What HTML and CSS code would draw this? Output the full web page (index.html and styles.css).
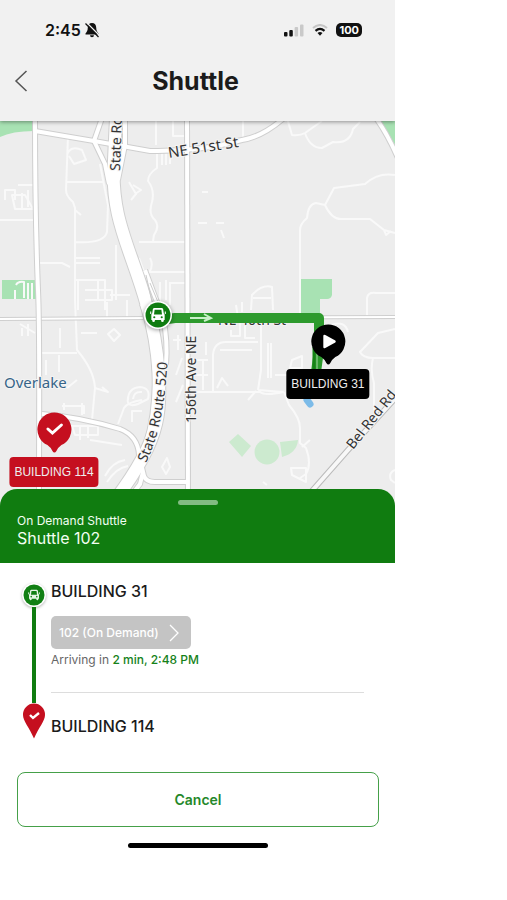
FILE: index.html
```html
<!DOCTYPE html>
<html lang="en">
<head>
    <meta charset="UTF-8">
    <meta name="viewport" content="width=device-width, initial-scale=1.0">
    <title>Shuttle</title>
    <link rel="stylesheet" href="styles.css">
</head>
<body>
    <div class="app">
        <header class="header">
            <div class="status-bar">
                <div class="status-left">
                    <span>2:45</span>
                    <svg width="16" height="16" viewBox="0 0 16 16">
                        <path d="M8 1C5.300 1 3.800 3 3.800 5.500C3.800 9 2.500 10 1.500 11.500V12.500H14.500V11.500C13.500 10 12.200 9 12.200 5.500C12.200 3 10.700 1 8 1ZM6 13.300A2 2 0 0 0 10 13.300Z" fill="#111"/>
                        <path d="M3 1L15.500 13.500" stroke="#f1f1f1" stroke-width="1.200"/>
                        <path d="M1.500 1.500L14.500 15" stroke="#111" stroke-width="1.200"/>
                    </svg>
                </div>
                <div class="status-right">
                    <svg width="20" height="13" viewBox="0 0 20 13">
                        <rect x="0" y="8" width="3.500" height="4.500" rx="1" fill="#111"/>
                        <rect x="5.300" y="6" width="3.500" height="6.500" rx="1" fill="#111"/>
                        <rect x="10.600" y="3" width="3.500" height="9.500" rx="1" fill="#c9c9c9"/>
                        <rect x="16" y="0.500" width="3.500" height="12" rx="1" fill="#c9c9c9"/>
                    </svg>
                    <svg width="16" height="12" viewBox="0 0 16 12" fill="none">
                        <path d="M1 4Q8 -2 15 4" stroke="#c6c6c6" stroke-width="2"/>
                        <path d="M3.500 6.800Q8 3 12.500 6.800" stroke="#111" stroke-width="2.200"/>
                        <path d="M5.500 9Q8 7 10.500 9L8 11.700Z" fill="#111"/>
                    </svg>
                    <span class="battery">100</span>
                </div>
            </div>
            <div class="title-bar">
                <button class="back" aria-label="Back">
                    <svg width="14" height="22" viewBox="0 0 14 22" fill="none" stroke="#555" stroke-width="1.500"><path d="M12.500 1L2 11L12.500 21"/></svg>
                </button>
                <h1>Shuttle</h1>
            </div>
        </header>

        <main>
            <div class="map">
                <svg class="map-canvas" viewBox="0 121 395 384">
                    <defs>
                        <path id="route520" d="M146 463C160 434 166 400 168 350"/>
                        <path id="belred" d="M353 450L420 366"/>
                        <!-- main roads, drawn once as casing and once as fill -->
                        <g id="roads" fill="none">
                            <path d="M35 118C35 180 36 240 38 290C40 330 39 400 39 500"/>
                            <path d="M187 118L188 500"/>
                            <path d="M35 131L94 141L150 151Q200 152 242 140Q262 137 284 118"/>
                            <path d="M102 118L94 141L105 164L109 184"/>
                            <path d="M125 118L125 145L118 180"/>
                            <path d="M376 118Q388 135 398 158"/>
                            <path d="M42 414Q80 417 120 429Q138 436 139 455L144 476Q146 482 155 482H188"/>
                            <path d="M110 500Q130 480 142 461"/>
                            <path d="M128 500L140 484L143 472"/>
                            <path d="M145 270L163 318Q168 340 166 365"/>
                            <path d="M142 304Q158 345 154 400Q152 430 141 458"/>
                        </g>
                        <path id="ne40" d="M0 319L150 318L395 317" fill="none"/>
                        <symbol id="car" viewBox="0 0 18 18">
                            <path fill-rule="evenodd" d="M5 1H13Q14.500 1 14.800 2.500L15.500 7Q16.500 7.500 16.500 9V14.500H15.500V15.500Q15.500 17 14 17T12.500 15.500V14.500H5.500V15.500Q5.500 17 4 17T2.500 15.500V14.500H1.500V9Q1.500 7.500 2.500 7L3.200 2.500Q3.500 1 5 1ZM5.200 3L4.500 8.500H13.500L12.800 3ZM4.800 10.300A1.200 1.200 0 1 0 4.800 12.700A1.200 1.200 0 1 0 4.800 10.300ZM13.200 10.300A1.200 1.200 0 1 0 13.200 12.700A1.200 1.200 0 1 0 13.200 10.300Z"/>
                            <path d="M.8 5V8M17.200 5V8" stroke="currentColor" stroke-width="1.200"/>
                        </symbol>
                    </defs>
                    <rect y="121" width="395" height="384" fill="#ededed"/>
                    <g fill="#a8e2b3">
                        <path d="M0 121H34V131Q12 131 0 137Z"/>
                        <path d="M2 280H36V299H2Z"/>
                        <path d="M301 279H332V295Q331 299 327 299H320V318H301Z"/>
                        <path d="M381 121H395V145Z"/>
                    </g>
                    <g fill="#cceacf">
                        <path d="M229 442L238 434L251 446L242 457Z"/>
                        <circle cx="267" cy="452" r="12.500"/>
                        <path d="M280 442L298 440Q297 453 282 457Z"/>
                    </g>
                    <g class="lanes">
                        <path d="M68 136L66 190Q66 196 73 202L75 208V300L77 350Q94 370 95 388L92 420M66 182H104M67 155Q70 145 82 150L86 160L74 164L69 156M75 242Q104 244 107 232L108 205L104 185L100 164M75 210L81 215"/>
                        <path d="M0 220H36M5 200V190H15V200M18 185H35M12 195H25L33 209H15ZM22 193V210M28 190V207"/>
                        <path d="M40 263H62L70 267M75 263H100M75 258H100M75 280H105V310M78 280V310M85 290H112V300H85M116 245V300M110 295H130M98 280V300"/>
                        <path d="M156 118V145M157 150V168Q148 174 148 181Q155 190 152 202Q148 214 155 220Q160 226 154 235L153 241M139 242H187M139 258L144 272H187M150 258Q154 265 149 273M170 283H187M160 282V310M166 280V300M170 282V305"/>
                        <path d="M173 118V136H187M162 153V165M166 153V165M170 153V164M129 182L136 194L131 200M133 185L141 190L135 194"/>
                        <path d="M16 285Q18 281 24 282V298M28 283V299M32 283V299M15 290V299"/>
                        <path d="M40 353H77M20 324L35 333M22 328V336M28 324V336M60 328V348M59 355V372M77 380L67 388M46 360V375M81 333H97M114 329L120 335L114 341L108 334ZM127 300V318M107 302V318"/>
                        <path d="M62 406H84V414M64 410V403M82 403V415M72 426H98V435H75ZM80 426V440M88 426V438M118 424L124 408Q128 402 142 400M128 400Q128 388 140 387Q151 388 148 399L138 404Q126 408 128 398M133 399Q134 391 142 392M95 388L108 392L102 387M132 422V411H142M90 440L122 445"/>
                        <path d="M167 458L162 467L166 474L170 467ZM178 335V350M173 340H181M176 375L182 358M176 402L183 385M105 476Q112 462 125 460M107 482Q116 468 128 466"/>
                        <path d="M243 118V140M287 118L292 135Q300 136 305 133L322 121M305 133Q310 148 322 148L333 142Q350 144 353 129L360 122"/>
                        <path d="M300 318V230Q300 224 307 218Q308 204 316 203L325 205L334 188L365 184Q378 172 395 175M325 205Q332 220 342 219H370L384 230L395 233M384 230L386 235L391 231M367 317V298Q368 292 376 293H395"/>
                        <path d="M251 310L252 295Q262 284 272 287L273 310M253 298H271M236 305L238 318M242 302V312M202 192H208M198 223H207M216 223H224M221 230L224 238"/>
                        <path d="M189 392H260Q265 396 283 392L258 390M213 392V355Q214 342 226 342H258M261 323V370L258 390M261 343V330M231 330V336H240V322M245 324V338H255M203 360V390M220 350H252M217 388L222 378L228 386M268 343V378M271 343V378M248 400L256 391M190 360H208M192 375H208M206 342V355"/>
                        <path d="M284 392L289 405Q300 418 300 428V443L306 448Q312 464 306 474L300 478M302 447L310 440M291 468H306V482L292 475ZM395 470Q388 473 391 480L395 483M263 482L267 485M292 360L302 356V368H290ZM290 372H304M275 375H288"/>
                        <path d="M395 329L378 333L360 352Q363 358 373 358H395M373 358Q370 370 374 383V410M331 325Q345 320 348 332M367 300V317"/>
                    </g>
                    <use href="#ne40" class="casing casing-thin"/>
                    <use href="#ne40" class="road road-thin"/>
                    <use href="#roads" class="casing"/>
                    <path class="highway-casing" d="M116 118L114 160C110 220 132 250 147 306C160 350 162 400 156 424Q149 455 115 500"/>
                    <use href="#roads" class="road"/>
                    <path class="highway" d="M116 118L114 160C110 220 132 250 147 306C160 350 162 400 156 424Q149 455 115 500"/>
                    <path d="M146 275L152 302M150 283L158 302" stroke="#ccc" fill="none"/>
                    <path class="belred-casing" d="M304 500L348 450L400 393"/>
                    <path class="belred" d="M304 500L348 450L400 393"/>
                    <g class="labels">
                        <text class="wide" x="169" y="158" transform="rotate(-9 169 158)">NE 51st St</text>
                        <text x="120" y="171" transform="rotate(-88 120 171)">State Route 520</text>
                        <text x="196" y="423" transform="rotate(-90 196 423)">156th Ave NE</text>
                        <text x="218" y="325">NE 40th St</text>
                        <text><textPath href="#route520">State Route 520</textPath></text>
                        <text><textPath href="#belred">Bel Red Rd</textPath></text>
                        <text class="wide district" x="4" y="388">Overlake</text>
                    </g>
                    <path d="M307 400L310 404" stroke="#7cbbe8" stroke-width="7" stroke-linecap="round"/>
                    <path d="M168 319L175 318H319V350L316 372" fill="none" stroke="#2d9a2d" stroke-width="10" stroke-linejoin="round"/>
                    <path d="M314 347V370" stroke="#168316" stroke-width="3"/>
                    <path d="M317 350V370" stroke="#a6d7a6" stroke-width="1"/>
                    <path d="M190 318H209M204 314L211 318L204 321" stroke="#c8f0c8" stroke-width="2" fill="none"/>
                </svg>

                <div class="pin pin-car">
                    <svg width="28" height="28" viewBox="0 0 28 28" color="#fff" fill="#fff">
                        <circle cx="14" cy="14" r="14"/>
                        <circle cx="14" cy="14" r="12.500" fill="#0e7c10"/>
                        <use href="#car" x="6" y="6" width="16" height="16"/>
                    </svg>
                </div>
                <div class="pin pin-start">
                    <svg width="36" height="42" viewBox="0 0 36 42">
                        <path d="M18 0.500A17 17 0 0 1 25 33Q22 35 20 39Q18 42 16 39Q14 35 11 33A17 17 0 0 1 18 0.500Z" fill="#000"/>
                        <path d="M13 12Q13 10 15 11L25 16.500Q26 17.500 25 18.500L15 24Q13 25 13 23Z" fill="#fff"/>
                    </svg>
                    <span class="pin-label">BUILDING 31</span>
                </div>
                <div class="pin pin-end">
                    <svg width="36" height="42" viewBox="0 0 36 42">
                        <path d="M18 0.500A17 17 0 0 1 25 33Q22 35 20 39Q18 42 16 39Q14 35 11 33A17 17 0 0 1 18 0.500Z" fill="#c50f1f"/>
                        <path d="M11.500 17L16 21L25 13" fill="none" stroke="#fff" stroke-width="3" stroke-linecap="round"/>
                    </svg>
                    <span class="pin-label">BUILDING 114</span>
                </div>
            </div>

            <section class="sheet">
                <div class="sheet-header">
                    <div class="handle"></div>
                    <p>On Demand Shuttle</p>
                    <h2>Shuttle 102</h2>
                </div>
                <div class="trip">
                    <div class="timeline">
                        <svg class="stop-car" width="24" height="24" viewBox="0 0 24 24" color="#e5f5e5" fill="#e5f5e5">
                            <circle cx="12" cy="12" r="10.500" fill="#128014"/>
                            <use href="#car" x="6" y="6" width="12" height="12"/>
                        </svg>
                        <div class="line"></div>
                        <svg width="24" height="36" viewBox="0 0 24 36">
                            <path d="M12 0.500A11 11 0 0 1 23 12C23 18 17 24 12 35.500C7 24 1 18 1 12A11 11 0 0 1 12 0.500Z" fill="#c50f1f"/>
                            <path d="M8 12L11 15L17 10" fill="none" stroke="#fff" stroke-width="2.400"/>
                        </svg>
                    </div>
                    <div class="stops">
                        <div class="stop">
                            <h3>BUILDING 31</h3>
                            <button class="route-btn">
                                102 (On Demand)
                                <svg width="10" height="18" viewBox="0 0 10 18" fill="none" stroke="#fff" stroke-width="1.300"><path d="M1 1L9 9L1 17"/></svg>
                            </button>
                            <p class="arrival">Arriving in <span>2 min, 2:48 PM</span></p>
                        </div>
                        <h3>BUILDING 114</h3>
                    </div>
                </div>
                <button class="cancel">Cancel</button>
                <div class="home-indicator"></div>
            </section>
        </main>
    </div>
</body>
</html>
```
FILE: styles.css
```css
* {
    box-sizing: border-box;
}
body {
    margin: 0;
    background: #fff;
    color: #1b1b1b;
    font-family: Inter, sans-serif;
}
h1, h2, h3, p {
    margin: 0;
}
button {
    font-family: inherit;
    cursor: pointer;
}
svg {
    display: block;
}
.app {
    width: 100%;
    max-width: 395px;
    overflow: hidden;
}
.header {
    position: relative;
    z-index: 1;
    background: #f1f1f1;
    box-shadow: 0 1px 4px rgba(0, 0, 0, 0.4);
    padding-top: 20px;
}
.status-bar {
    display: flex;
    justify-content: space-between;
    align-items: center;
    height: 20px;
    padding: 0 33px 0 45px;
}
.status-left, .status-right {
    display: flex;
    align-items: center;
}
.status-left {
    gap: 3px;
    font-size: 16px;
    font-weight: 600;
    color: #111;
}
.status-right {
    gap: 8px;
}
.battery {
    background: #111;
    color: #fff;
    border-radius: 5px;
    font-size: 11px;
    font-weight: 700;
    line-height: 14px;
    padding: 0 3px;
}
.title-bar {
    display: grid;
    grid-template-columns: 44px 1fr 48px;
    align-items: center;
    height: 81px;
}
.title-bar h1 {
    font-size: 25px;
    font-weight: 700;
    line-height: 32px;
    text-align: center;
}
.back {
    background: none;
    border: none;
    padding: 10px 14px;
}
.map {
    position: relative;
    overflow: hidden;
}
.map-canvas {
    width: 100%;
    height: auto;
}
.lanes {
    fill: none;
    stroke: #f9f9f9;
    stroke-width: 2;
    stroke-linejoin: round;
}
.casing {
    stroke: #cfcfcf;
    stroke-width: 6;
}
.road {
    stroke: #fff;
    stroke-width: 4;
}
.casing-thin {
    stroke-width: 4;
}
.road-thin {
    stroke-width: 2;
}
.highway, .highway-casing {
    fill: none;
    stroke: #cfcfcf;
    stroke-width: 14;
}
.highway {
    stroke: #fff;
    stroke-width: 12;
}
.belred, .belred-casing {
    fill: none;
    stroke: #bbb;
    stroke-width: 6;
}
.belred {
    stroke: #f8f8f8;
    stroke-width: 4;
}
.labels {
    font-family: "Noto Sans", sans-serif;
    font-size: 14px;
    fill: #333;
    stroke: #f4f4f4;
    stroke-width: 2;
    paint-order: stroke;
}
.labels .wide {
    font-size: 15px;
}
.labels .district {
    fill: #376488;
}
.pin {
    position: absolute;
    display: flex;
    flex-direction: column;
    align-items: center;
    gap: 3px;
    transform: translateX(-50%);
}
.pin-car {
    left: 40%;
    top: 180px;
    filter: drop-shadow(0 1px 2px rgba(0, 0, 0, 0.4));
}
.pin-start {
    left: 83%;
    top: 203px;
}
.pin-end {
    left: 54px;
    top: 291px;
}
.pin-label {
    background: #000;
    color: #eee;
    border-radius: 4px;
    font-family: "Liberation Sans", Arial, sans-serif;
    font-size: 12px;
    line-height: 30px;
    padding: 0 5px;
    white-space: nowrap;
}
.pin-end .pin-label {
    background: #c50f1f;
}
.sheet {
    position: relative;
    margin-top: -16px;
}
.sheet-header {
    background: #107c10;
    color: #f2fff2;
    border-radius: 17px 17px 0 0;
    padding: 11px 17px 15px;
}
.handle {
    width: 40px;
    height: 5px;
    margin: 0 auto 8px;
    border-radius: 3px;
    background: #83bb83;
}
.sheet-header p {
    font-size: 12px;
    line-height: 16px;
}
.sheet-header h2 {
    font-size: 16px;
    font-weight: 400;
    line-height: 19px;
}
.trip {
    display: flex;
    gap: 5px;
    padding: 18px 31px 0 22px;
}
.timeline {
    display: flex;
    flex-direction: column;
    align-items: center;
    width: 24px;
    padding-top: 2px;
}
.stop-car {
    border-radius: 50%;
    box-shadow: 0 1px 3px rgba(0, 0, 0, 0.3);
}
.line {
    flex: 1;
    width: 4px;
    background: #107c10;
}
.stops {
    flex: 1;
    padding-bottom: 3px;
}
.stop {
    border-bottom: 1px solid #ddd;
    padding-bottom: 24px;
    margin-bottom: 23px;
}
.stops h3 {
    font-size: 16px;
    font-weight: 500;
    line-height: 20px;
}
.route-btn {
    display: flex;
    align-items: center;
    gap: 10px;
    height: 33px;
    margin: 15px 0 3px;
    padding: 0 12px 0 8px;
    background: #c4c4c4;
    color: #fff;
    border: none;
    border-radius: 5px;
    font-size: 12px;
    font-weight: 500;
}
.arrival {
    color: #666;
    font-size: 12px;
    line-height: 16px;
}
.arrival span {
    color: #16821a;
    font-weight: 500;
}
.cancel {
    display: block;
    width: calc(100% - 33px);
    height: 55px;
    margin: 33px auto 16px 17px;
    background: #fff;
    color: #24882a;
    border: 1px solid #45a049;
    border-radius: 8px;
    font-size: 14px;
    font-weight: 600;
}
.home-indicator {
    width: 140px;
    height: 5px;
    margin: 0 auto;
    border-radius: 3px;
    background: #000;
}
```
